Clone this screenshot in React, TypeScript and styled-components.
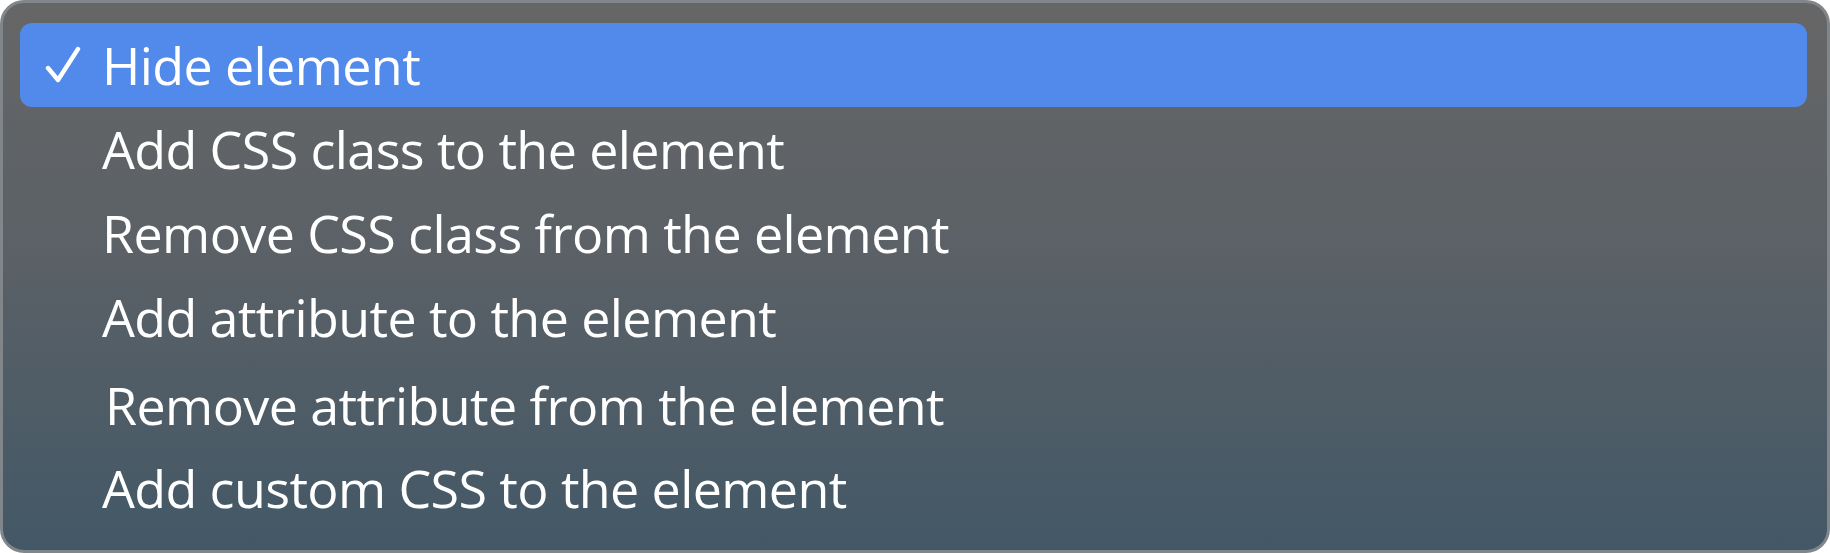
import React from 'react';
import styled, { createGlobalStyle } from 'styled-components';

const GlobalStyle = createGlobalStyle`
  html, body {
    margin: 0;
    padding: 0;
    background: #ffffff;
  }
  body {
    font-family: 'Open Sans', 'Noto Sans', sans-serif;
  }
`;

const Menu = styled.ul`
  box-sizing: border-box;
  width: 1830px;
  height: 553px;
  margin: 0;
  padding: 20px 20px 21px 17px;
  list-style: none;
  border: 3px solid #80868a;
  border-radius: 24px;
  background: linear-gradient(180deg, #666666 0%, #5b6166 45%, #435866 100%);
  overflow: hidden;
`;

interface ItemProps {
  $selected?: boolean;
  $dx?: number;
  $dy?: number;
}

const Item = styled.li<ItemProps>`
  display: flex;
  align-items: center;
  height: 84px;
  padding-left: ${(p) => 82 + (p.$dx || 0)}px;
  padding-top: ${(p) => (p.$dy || 0) * 2}px;
  box-sizing: border-box;
  position: relative;
  border-radius: 12px;
  background: ${(p) => (p.$selected ? '#518aeb' : 'transparent')};
  color: #ffffff;
  font-size: 52px;
  letter-spacing: -0.6px;
  line-height: 1;
  white-space: nowrap;
`;

const Check = styled.svg`
  position: absolute;
  left: 24px;
  top: 23px;
  width: 38px;
  height: 38px;
`;

const items = [
  { label: 'Hide element' },
  { label: 'Add CSS class to the element' },
  { label: 'Remove CSS class from the element' },
  { label: 'Add attribute to the element' },
  { label: 'Remove attribute from the element', dx: 3, dy: 4 },
  { label: 'Add custom CSS to the element', dy: 3 },
];

const App = () => {
  return (
    <>
      <GlobalStyle />
      <Menu>
        {items.map((item, i) => (
          <Item key={item.label} $selected={i === 0} $dx={item.dx} $dy={item.dy}>
            {i === 0 && (
              <Check viewBox='0 0 38 38'>
                <path
                  d='M4 22 L14 34 L34 3'
                  fill='none'
                  stroke='#ffffff'
                  strokeWidth='4.4'
                  strokeLinecap='round'
                  strokeLinejoin='round'
                />
              </Check>
            )}
            {item.label}
          </Item>
        ))}
      </Menu>
    </>
  );
};

export default App;
